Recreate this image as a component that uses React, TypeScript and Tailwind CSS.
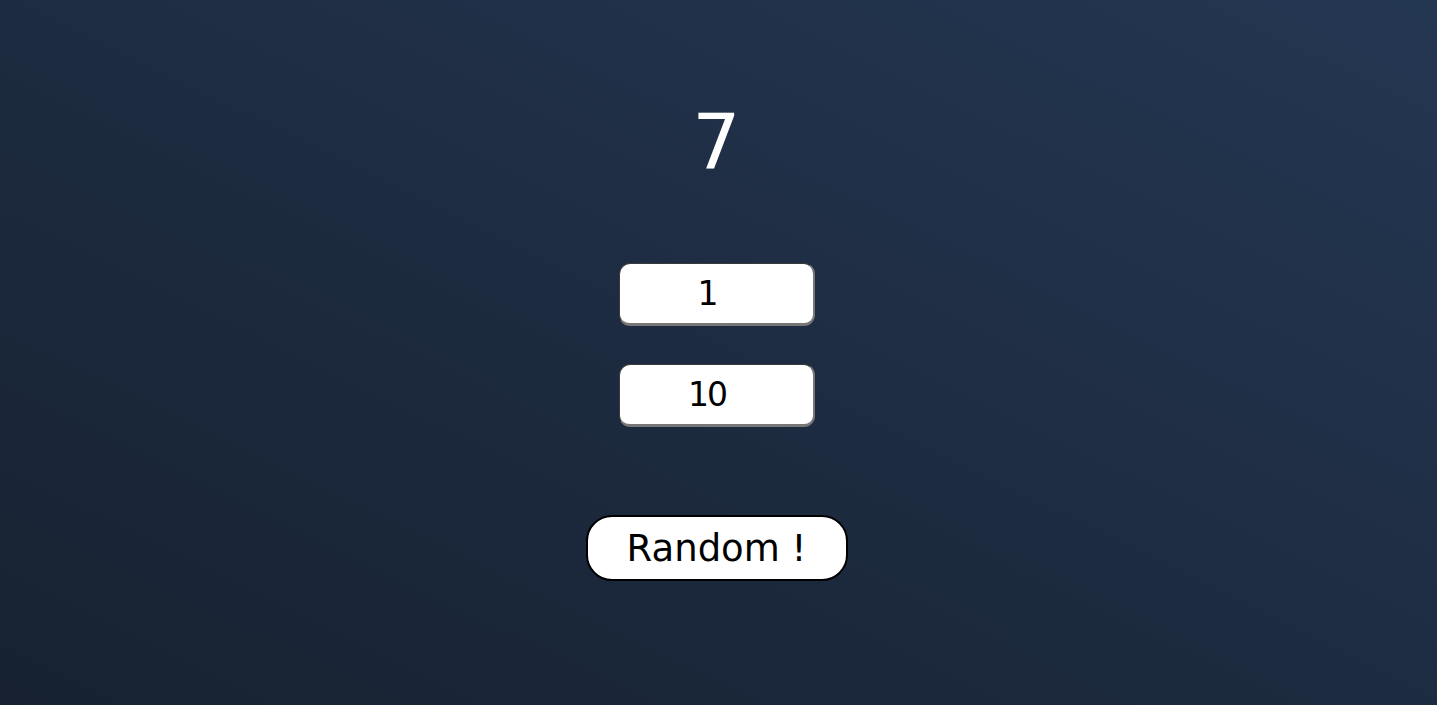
import React, { useState } from "react";

export default function App() {
  const [min, setMin] = useState("1");
  const [max, setMax] = useState("10");
  const inputCls =
    "w-[196px] h-[63px] rounded-[11px] bg-white text-black text-center text-[33px] pl-[2px] pr-[20px] border border-[#3a3a3a] border-b-[3px] border-b-[#777] border-r-[2px] border-r-[#777] outline-none";
  return (
    <div
      className="w-full h-[705px] flex flex-col items-center pr-[4px] bg-gradient-to-tr from-[#172131] to-[#243752] text-white"
      style={{ fontFamily: '"DejaVu Sans", "Noto Sans", sans-serif' }}
    >
      <div className="mt-[97px] h-[92px] flex items-center justify-center text-[76px] leading-none font-normal text-white">
        7
      </div>
      <div className="mt-[74px] flex flex-col gap-[38px]">
        <input
          value={min}
          onChange={(e) => setMin(e.target.value)}
          className={inputCls}
          style={{ fontFamily: '"DejaVu Sans", sans-serif', letterSpacing: "-2px" }}
        />
        <input
          value={max}
          onChange={(e) => setMax(e.target.value)}
          className={inputCls}
          style={{ fontFamily: '"DejaVu Sans", sans-serif', letterSpacing: "-2px" }}
        />
      </div>
      <button className="mt-[88px] w-[262px] h-[66px] rounded-[26px] bg-white border-2 border-black text-black text-[37px] leading-none">
        Random !
      </button>
    </div>
  );
}
